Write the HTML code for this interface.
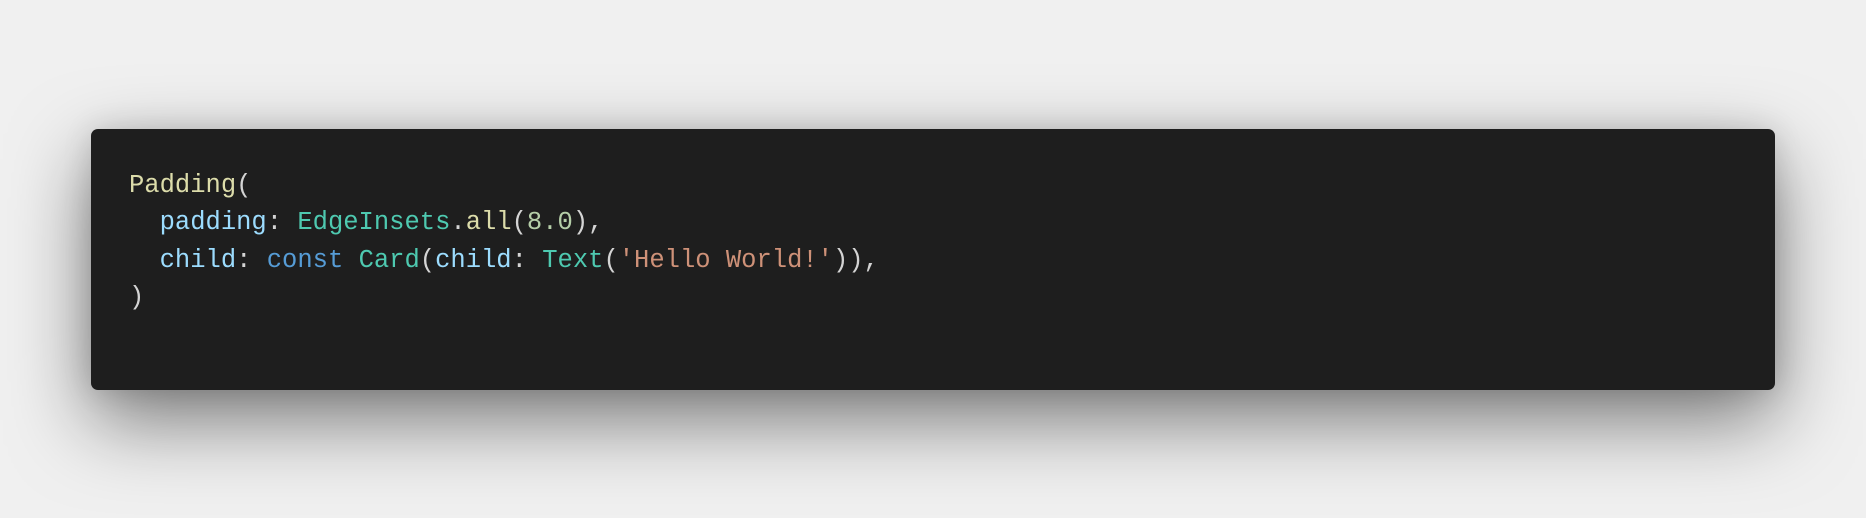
<!DOCTYPE html>
<html><head><style>
html,body{margin:0;padding:0;width:1866px;height:518px;background:#f0f0f0;overflow:hidden}
.card{position:absolute;left:91px;top:129px;width:1684px;height:261px;background:#1e1e1e;border-radius:7px;
box-shadow:0 30px 80px rgba(0,0,0,0.5),0 0 30px rgba(0,0,0,0.12)}
pre{margin:0;position:absolute;left:38px;top:38px;font-family:"Liberation Mono",monospace;font-size:25.5px;line-height:37.4px;color:#d4d4d4}
.f{color:#dcdcaa}.p{color:#9cdcfe}.c{color:#4ec9b0}.k{color:#569cd6}.s{color:#ce9178}.n{color:#b5cea8}
</style></head><body>
<div class="card"><pre><span class="f">Padding</span>(
  <span class="p">padding</span>: <span class="c">EdgeInsets</span>.<span class="f">all</span>(<span class="n">8.0</span>),
  <span class="p">child</span>: <span class="k">const</span> <span class="c">Card</span>(<span class="p">child</span>: <span class="c">Text</span>(<span class="s">'Hello World!'</span>)),
)</pre></div>
</body></html>
